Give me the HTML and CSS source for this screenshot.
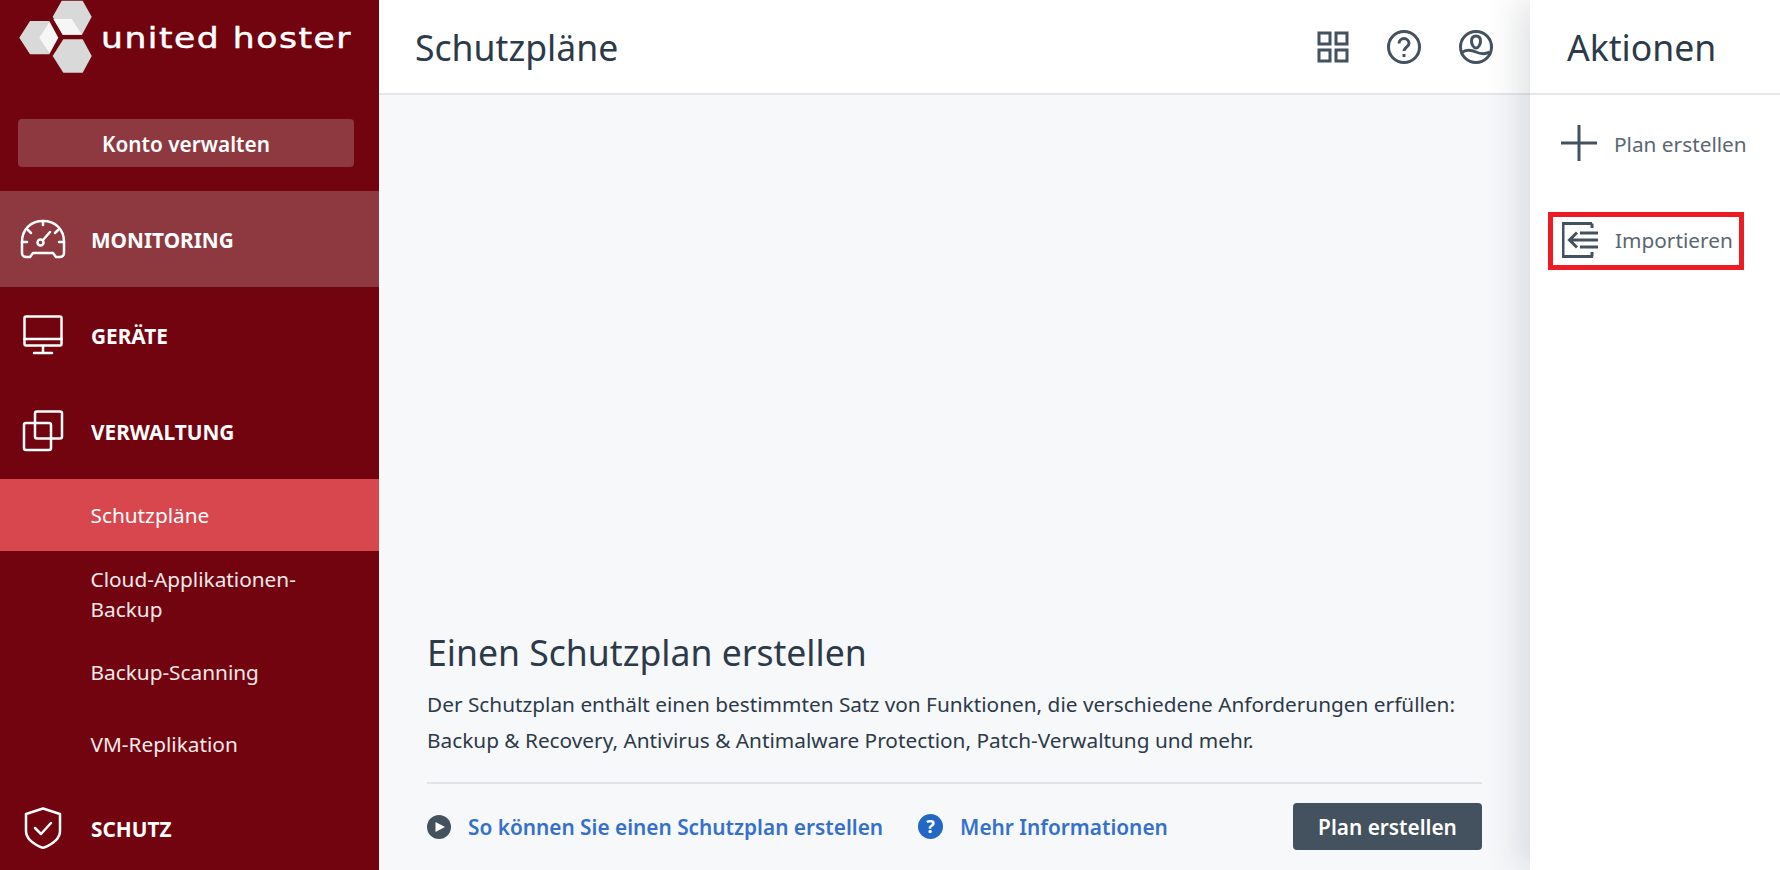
FILE: index.html
```html
<!DOCTYPE html>
<html lang="de">
<head>
<meta charset="utf-8">
<title>Schutzpläne</title>
<link rel="stylesheet" href="styles.css">
</head>
<body>
<div class="app">
  <aside class="sidebar">
    <div class="logo">
      <svg class="logo-mark" viewBox="19 0 74 74" width="74" height="74">
        <polygon class="hex" points="61.700,0.700 82.700,0.700 91.700,16.700 82,34.700 62.700,34.700 52.700,16.700"/>
        <polygon class="hex-light" points="53.300,19 71.700,19 82,34.700 62.700,34.700"/>
        <polygon class="hex" points="52.700,56 63.300,39.300 82.700,39.300 91.700,56 82.700,72.700 63.300,72.700"/>
        <polygon class="hex" points="19.300,37.700 30,21 49.300,21 40,37.700 49.300,54.300 30,54.300"/>
        <polygon class="hex-light" points="49.300,21 58.300,37.700 49.300,54.300 39.300,37.700"/>
      </svg>
      <span class="logo-text">united hoster</span>
    </div>
    <div class="account"><button class="account-btn">Konto verwalten</button></div>
    <nav class="nav">
      <a class="nav-item is-active">
        <span class="nav-slot"><svg class="nav-icon" viewBox="0 0 48 42" width="48" height="42"><path d="M11 39H7a4 4 0 0 1-4-4V24C3 11 12 3 24 3s21 8 21 21v11a4 4 0 0 1-4 4h-4l-3-4H14z"/><path d="M24 3v4M9 12l3 3M39 12l-3 3M3 24h5M45 24h-5"/><circle cx="21.500" cy="24.500" r="3"/><path d="M24 22l7-8"/></svg></span>
        <span class="nav-label">MONITORING</span>
      </a>
      <a class="nav-item">
        <span class="nav-slot"><svg class="nav-icon" viewBox="0 0 40 40" width="40" height="40"><rect x="1.500" y="1.500" width="37" height="29" rx="1.500"/><path d="M1.500 24h37M20 31v6M11 38h18"/></svg></span>
        <span class="nav-label">GERÄTE</span>
      </a>
      <a class="nav-item">
        <span class="nav-slot"><svg class="nav-icon" viewBox="0 0 42 42" width="42" height="42"><rect x="13" y="1.500" width="27" height="27" rx="2"/><rect x="2" y="13" width="27" height="27" rx="2"/></svg></span>
        <span class="nav-label">VERWALTUNG</span>
      </a>
      <a class="sub-item is-current">Schutzpläne</a>
      <a class="sub-item is-double">Cloud-Applikationen-<br>Backup</a>
      <a class="sub-item">Backup-Scanning</a>
      <a class="sub-item">VM-Replikation</a>
      <a class="nav-item">
        <span class="nav-slot"><svg class="nav-icon" viewBox="0 0 38 42" width="38" height="42"><path d="M19 1.500 36 7v17c0 8-7 13-17 17C9 37 2 32 2 24V7z"/><path d="M11 21l6 6 10-11"/></svg></span>
        <span class="nav-label">SCHUTZ</span>
      </a>
    </nav>
  </aside>

  <div class="main">
    <header class="topbar">
      <h1 class="page-title">Schutzpläne</h1>
      <div class="top-icons">
        <svg class="top-icon" viewBox="0 0 32 32" width="32" height="32"><rect x="2" y="2" width="11" height="11"/><rect x="19" y="2" width="11" height="11"/><rect x="2" y="19" width="11" height="11"/><rect x="19" y="19" width="11" height="11"/></svg>
        <svg class="top-icon" viewBox="0 0 34 34" width="34" height="34"><circle cx="17" cy="17" r="15.500"/><path d="M12 13.500a5 5 0 0 1 10 0c0 3.500-5 3.500-5 7.500"/><path d="M17 24v3"/></svg>
        <svg class="top-icon" viewBox="0 0 34 34" width="34" height="34"><circle cx="17" cy="17" r="15.500"/><path d="M17 6c-3 0-4.500 2-4.500 5 0 3 1.800 7 4.500 7s4.500-4 4.500-7c0-3-1.500-5-4.500-5z"/><path d="M3.500 22c4.500-2.500 8-2.500 13.500 0s9 2.500 13.500 0"/></svg>
      </div>
    </header>
    <section class="content">
      <div class="promo">
        <h2 class="promo-title">Einen Schutzplan erstellen</h2>
        <p class="promo-text">Der Schutzplan enthält einen bestimmten Satz von Funktionen, die verschiedene Anforderungen erfüllen:<br>Backup &amp; Recovery, Antivirus &amp; Antimalware Protection, Patch-Verwaltung und mehr.</p>
        <div class="promo-footer">
          <a class="promo-link">
            <svg viewBox="0 0 24 24" width="24" height="24"><circle class="play-bg" cx="12" cy="12" r="12"/><polygon class="play-fg" points="8.500,7 18,12 8.500,17"/></svg>
            So können Sie einen Schutzplan erstellen
          </a>
          <a class="promo-link">
            <span class="help-badge">?</span>
            Mehr Informationen
          </a>
          <button class="primary-btn">Plan erstellen</button>
        </div>
      </div>
    </section>
  </div>

  <aside class="actions">
    <h2 class="actions-title">Aktionen</h2>
    <div class="action-row">
      <a class="action">
        <svg class="action-icon" viewBox="0 0 36 36" width="36" height="36"><path d="M18 0v36M0 18h36"/></svg>
        <span class="action-label">Plan erstellen</span>
      </a>
    </div>
    <div class="action-row">
      <a class="action is-marked">
        <svg class="action-icon" viewBox="0 0 36 36" width="36" height="36"><path d="M30 1.500H1v33h30M30 34.500V30M30 1.500V6M8 18h28M15 10.500 7.500 18l7.500 7.500M18 11h18M18 25h18"/></svg>
        <span class="action-label">Importieren</span>
      </a>
    </div>
  </aside>
</div>
</body>
</html>
```
FILE: styles.css
```css
* { box-sizing: border-box; }
html, body { margin: 0; height: 100%; overflow: hidden; }
body { font-family: "Noto Sans", "Open Sans", sans-serif; color: #2c3a49; background: #fff; }
.app { display: flex; height: 870px; overflow: hidden; }

.sidebar { width: 379px; flex: none; background: #72040f; color: #fff; overflow: hidden; }
.logo { height: 119px; padding: 0 0 0 19px; display: flex; align-items: flex-start; }
.logo-mark { flex: none; }
.hex { fill: #d9d9d9; }
.hex-light { fill: #f6f6f6; }
.logo-text { margin: 18px 0 0 8px; font-family: "DejaVu Sans", sans-serif; font-size: 29px; line-height: 40px; letter-spacing: 1.300px; color: #fff; white-space: nowrap; transform: scaleX(1.190); transform-origin: left center; -webkit-text-stroke: .5px #fff; }

.account { height: 72px; padding: 0 25px 0 18px; }
.account-btn { display: block; width: 100%; height: 48px; padding: 2px 0 0; border: 0; border-radius: 4px; background: #8e3840; color: #fff; font: 600 20.800px "Noto Sans", sans-serif; }

.nav { display: flex; flex-direction: column; }
.nav-item { flex: none; height: 96px; display: flex; align-items: center; font-size: 20.800px; font-weight: 700; color: #fff; }
.nav-item.is-active { background: #8e3840; }
.nav-slot { width: 85px; margin-right: 6px; display: flex; justify-content: center; flex: none; }
.nav-label { padding-top: 2px; }
.nav-icon { fill: none; stroke: #fff; stroke-width: 2.500; stroke-linejoin: round; stroke-linecap: round; }
.sub-item { flex: none; height: 72px; display: flex; align-items: center; padding-left: 90.500px; font-size: 20.800px; line-height: 30px; color: #f6e9ea; }
.sub-item.is-double { height: 85px; }
.sub-item.is-current { background: #d8474e; color: #fff; }

.main { flex: 1; min-width: 0; display: flex; flex-direction: column; background: #f7f8fa; }
.topbar { height: 95px; flex: none; background: #fff; border-bottom: 2px solid #e4e6ea; display: flex; align-items: center; justify-content: space-between; padding: 0 37px 0 36px; }
.page-title { margin: 0; font-size: 35.600px; font-weight: 400; }
.top-icons { display: flex; align-items: center; gap: 38px; }
.top-icon { fill: none; stroke: #44515e; stroke-width: 3; }

.content { flex: 1; display: flex; flex-direction: column; justify-content: flex-end; padding: 0 48px 20px; }
.promo-title { margin: 0 0 11px; font-size: 35.600px; font-weight: 400; line-height: 46px; }
.promo-text { margin: 0; font-size: 20.800px; line-height: 36px; }
.promo-footer { margin-top: 24px; padding-top: 19px; border-top: 2px solid #e1e3e7; display: flex; align-items: center; }
.promo-link { display: flex; align-items: center; gap: 17px; color: #3570cd; font-size: 20.800px; font-weight: 600; margin-right: 35px; }
.play-bg { fill: #44515e; }
.play-fg { fill: #fff; }
.help-badge { width: 25px; height: 25px; border-radius: 50%; background: #2367c5; color: #fff; font-size: 18px; font-weight: 700; line-height: 25px; text-align: center; }
.primary-btn { margin-left: auto; height: 47px; width: 189px; border: 0; border-radius: 4px; background: #44515e; color: #fff; font: 600 20.800px "Noto Sans", sans-serif; }

.actions { width: 250px; flex: none; background: #fff; box-shadow: -12px 0 32px rgba(30, 40, 55, .13); position: relative; }
.actions-title { margin: 0; height: 95px; border-bottom: 2px solid #e4e6ea; padding-left: 37px; font-size: 35.600px; font-weight: 400; line-height: 94px; }
.action-row { height: 96px; display: flex; align-items: center; padding-left: 18px; }
.action { display: flex; align-items: center; gap: 17px; font-size: 20.800px; color: #5a6672; }
.action-label { padding-top: 2px; }
.action-icon { flex: none; fill: none; stroke: #44515e; stroke-width: 3; margin-left: 13px; }
.action.is-marked { width: 196px; height: 58px; margin-top: 4px; padding-bottom: 3px; border: 5px solid #ed1c24; }
.action.is-marked .action-icon { margin-left: 9px; }
.action.is-marked .action-label { padding-top: 0; }
```
